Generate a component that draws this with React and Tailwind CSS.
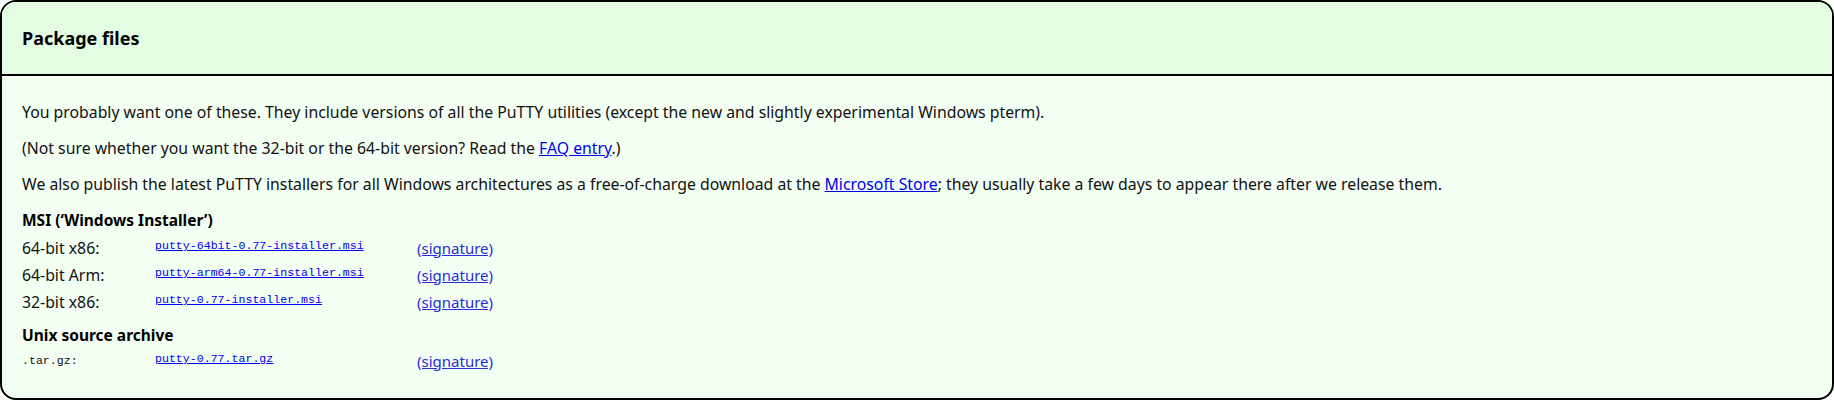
const rows = [
  { label: "64-bit x86:", file: "putty-64bit-0.77-installer.msi" },
  { label: "64-bit Arm:", file: "putty-arm64-0.77-installer.msi" },
  { label: "32-bit x86:", file: "putty-0.77-installer.msi" },
]

function Row({ label, file, mono }) {
  return (
    <div className="grid grid-cols-[133px_262px_auto] h-[27px] items-center">
      {mono ? (
        <span className="font-['Liberation_Mono',monospace] text-[11.6px]">{label}</span>
      ) : (
        <span>{label}</span>
      )}
      <a href="#" className="font-['Liberation_Mono',monospace] text-[11.6px] text-[#0000ee] underline -mt-[3px]">
        {file}
      </a>
      <a href="#" className="text-[15px] text-[#2b2bd9] underline">(signature)</a>
    </div>
  )
}

export default function App() {
  return (
    <div className="min-h-screen bg-white font-['Noto_Sans',sans-serif] text-[15.8px] leading-[20px] text-[#111]">
      {/* Package files box */}
      <div className="border-2 border-black rounded-[16px] overflow-hidden bg-[#f4fff4]">
        <div className="h-[74px] border-b-2 border-black bg-[#e3fde3] flex items-center px-[20px]">
          <h2 className="text-[18px] font-bold text-black">Package files</h2>
        </div>

        <div className="px-[20px] pt-[26px] pb-[24px]">
          <p className="mb-4">
            You probably want one of these. They include versions of all the PuTTY utilities (except the new and
            slightly experimental Windows pterm).
          </p>
          <p className="mb-4">
            (Not sure whether you want the 32-bit or the 64-bit version? Read the{" "}
            <a href="#" className="text-[#0000ee] underline">FAQ entry</a>.)
          </p>
          <p className="mb-[14px]">
            We also publish the latest PuTTY installers for all Windows architectures as a free-of-charge download at
            the <a href="#" className="text-[#0000ee] underline">Microsoft Store</a>; they usually take a few days to
            appear there after we release them.
          </p>

          <h3 className="text-[15.5px] font-bold leading-[24px] text-black">MSI (‘Windows Installer’)</h3>
          <div className="mt-[2px]">
            {rows.map((r) => (
              <Row key={r.file} {...r} />
            ))}
          </div>

          <h3 className="text-[15.5px] font-bold leading-[24px] text-black mt-2">Unix source archive</h3>
          <Row label=".tar.gz:" file="putty-0.77.tar.gz" mono />
        </div>
      </div>
    </div>
  )
}
